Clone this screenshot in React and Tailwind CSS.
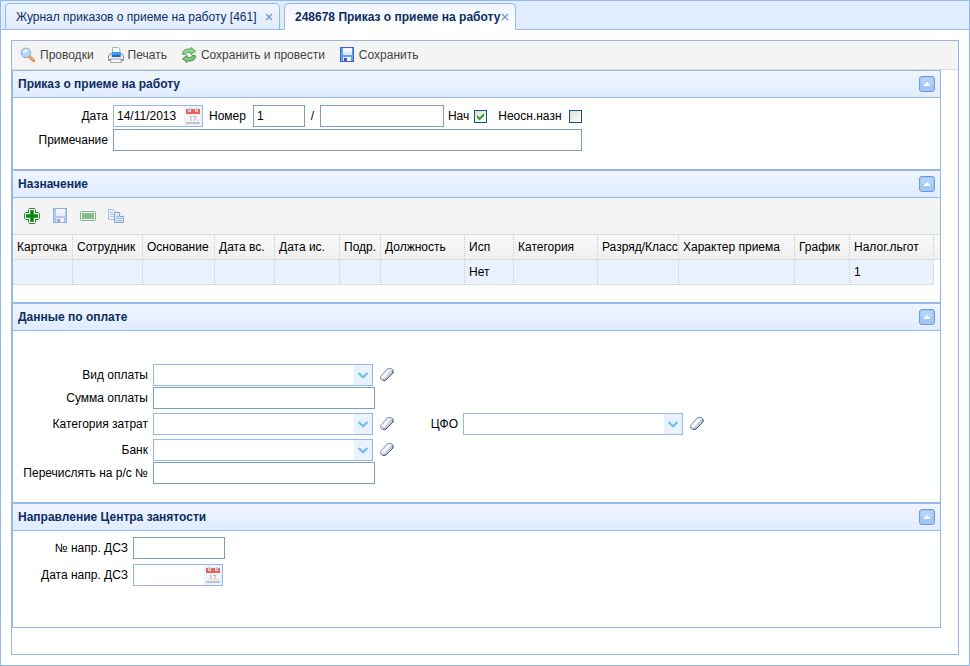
import { useState } from "react";

const COLUMNS = [
  { title: "Карточка", width: "w-[60px]" },
  { title: "Сотрудник", width: "w-[70px]" },
  { title: "Основание", width: "w-[72px]" },
  { title: "Дата вс.", width: "w-[60px]" },
  { title: "Дата ис.", width: "w-[65px]" },
  { title: "Подр.", width: "w-[41px]" },
  { title: "Должность", width: "w-[84px]" },
  { title: "Исп", width: "w-[49px]", value: "Нет" },
  { title: "Категория", width: "w-[84px]" },
  { title: "Разряд/Класс", width: "w-[81px]" },
  { title: "Характер приема", width: "w-[116px]" },
  { title: "График", width: "w-[55px]" },
  { title: "Налог.льгот", width: "w-[84px]", value: "1" }
];

function SearchIcon() {
  return (
    <svg viewBox="0 0 16 16" className="h-4 w-4 shrink-0" aria-hidden="true">
      <path d="M9.5 9.5l4 4" stroke="#b9793a" strokeWidth="3" strokeLinecap="round" />
      <path d="M10 9.600l3.400 3.400" stroke="#f8ae52" strokeWidth="1.800" strokeLinecap="round" />
      <circle cx="6" cy="5.800" r="4.700" fill="#b0dafa" stroke="#a3b4d0" strokeWidth="1.300" />
      <path d="M2.800 5.600a3.400 3.400 0 0 1 5.400-2.400C7 5.400 5 6 2.800 5.600z" fill="#e9f6ff" />
    </svg>
  );
}

function PrintIcon() {
  return (
    <svg viewBox="0 0 16 16" className="h-4 w-4 shrink-0" aria-hidden="true">
      <path d="M4.500.5h6l1.500 1.500V9H4.500z" fill="#f4f7fc" stroke="#a3b1c8" />
      <path d="M2 6.500h2V9h8.500V6.500H14l1.500 2.500v4.500H.5V9z" fill="#e2e5ec" stroke="#8d93a0" />
      <path d="M4 5h8.500v4H4z" fill="#3d9af5" />
      <path d="M4 8h8.500v2H4z" fill="#1766cb" />
      <path d="M1 10.500h14v1H1z" fill="#fafbfd" />
      <path d="M1 12h14v2H1z" fill="#8e949f" />
      <path d="M3 12h10l.5 3.500h-11z" fill="#f7f8fb" stroke="#8d93a0" strokeWidth=".8" />
    </svg>
  );
}

function RefreshIcon() {
  return (
    <svg viewBox="0 0 16 16" className="h-4 w-4 shrink-0" aria-hidden="true">
      <path
        d="M1.500 7.200C1.500 3.800 4 2 7 2h3V.6l4.500 3.600L10 7.600V5.600H7.500C5.500 5.600 5 6.300 4.800 7.500z"
        fill="#94d68f"
        stroke="#4a9550"
        strokeWidth=".9"
        strokeLinejoin="round"
      />
      <path
        d="M14.500 8.800C14.500 12.200 12 14 9 14H6v1.400L1.500 11.800 6 8.400v2h2.500c2 0 2.500-.7 2.700-1.900z"
        fill="#7cc878"
        stroke="#3d8544"
        strokeWidth=".9"
        strokeLinejoin="round"
      />
    </svg>
  );
}

function SaveIcon({ className = "" }) {
  return (
    <svg viewBox="0 0 16 16" className={`h-4 w-4 shrink-0 ${className}`} aria-hidden="true">
      <path d="M1 0h14v15H1z" fill="#3f63c4" />
      <path d="M2 1h12v13H2z" fill="#5fa0f5" />
      <path d="M4 1h9v7H4z" fill="#f2f8ff" />
      <path d="M4 5h9v3H4z" fill="#dbeafb" />
      <path d="M4 10h8v4H4z" fill="#e3e6f6" />
      <path d="M5 11h3v3H5z" fill="#5450b8" />
      <path d="M9 10h2v4H9z" fill="#fff" />
    </svg>
  );
}

function AddIcon() {
  return (
    <svg viewBox="0 0 16 16" className="h-4 w-4" aria-hidden="true">
      <path
        d="M5.500.5h5l1 1v3h3l1 1v5l-1 1h-3v3l-1 1h-5l-1-1v-3h-3l-1-1v-5l1-1h3v-3z"
        fill="#fff"
        stroke="#3b7a4b"
      />
      <path d="M6 2h4v4h4v4h-4v4H6v-4H2V6h4z" fill="#27a52b" />
      <path d="M7 3h2v4h4v2H9v4H7V9H3V7h4z" fill="#078a0b" />
    </svg>
  );
}

function RemoveIcon() {
  return (
    <svg viewBox="0 0 16 16" className="h-4 w-4 opacity-60" aria-hidden="true">
      <rect x=".5" y="3.500" width="15" height="9" rx="1" fill="#fff" stroke="#3b8a4b" />
      <path d="M2 5h12v6H2z" fill="#3fa04b" />
    </svg>
  );
}

function CopyIcon() {
  return (
    <svg viewBox="0 0 16 16" className="h-4 w-4 opacity-70" aria-hidden="true">
      <path d="M.5 1.500h5l3 3v7h-8z" fill="#eaf3ff" stroke="#8aa9d6" />
      <path d="M2 4.500h3M2 6.500h5M2 8.500h5" stroke="#8ab0e0" />
      <path d="M6.500 4.500h5l4 4v6h-9z" fill="#cfe3ff" stroke="#5b83bd" />
      <path d="M11.500 4.500v4h4" fill="#fff" stroke="#5b83bd" />
      <path d="M8 8.500h2.500M8 10.500h6M8 12.500h6" stroke="#7dabea" />
    </svg>
  );
}

function CalendarIcon() {
  return (
    <svg viewBox="0 0 16 16" className="h-4 w-4" aria-hidden="true">
      <path d="M1 6h14v9H1z" fill="#f4f4f4" />
      <path d="M1 14h14v2H1z" fill="#c4c4c4" />
      <path d="M1 1h14v5H1z" fill="#e8635e" />
      <path d="M3 0h3v4H3zM10 0h3v4h-3z" fill="#dcd3d3" />
      <path d="M4 1h1v2H4zM11 1h1v2h-1z" fill="#b9a5a5" />
      <path d="M5 8.500l1-.5v5M8 8.500h3L9.300 13" fill="none" stroke="#b9b9b9" />
      <path d="M11.500 12l2.500-.5-1 2.500z" fill="#d4d4d4" />
    </svg>
  );
}

function EraserIcon() {
  return (
    <svg viewBox="0 0 16 16" className="h-4 w-4" aria-hidden="true">
      <path
        d="M8.500 1.500h4l1.500 1.500v3L8 12l-2 1.500H3L1.500 12V9.500z"
        fill="#c3cbdc"
        stroke="#93a0ba"
        strokeLinejoin="round"
      />
      <path d="M9 2.500h3.500L7 9.500l-1.500 1.500H2.500V9.500z" fill="#f8f6fc" />
      <path d="M14 3.500V6L8 12l-2 1.500H4" fill="none" stroke="#4a5873" />
    </svg>
  );
}

function Tab({ title, active }) {
  return (
    <div
      className={`-mb-px flex h-[27px] items-center justify-between rounded-t-[5px] border border-[#95b8e7] bg-linear-to-b from-[#eff5ff] pr-1.5 pl-2.5 whitespace-nowrap text-[#0e2d5f] ${
        active ? "w-[232px] border-b-white to-white font-bold" : "w-[275px] to-[#e0ecff]"
      }`}
    >
      <button type="button" role="tab" aria-selected={active}>
        {title}
      </button>
      <button type="button" aria-label="Закрыть" className="flex h-3 w-2 items-center justify-center">
        <svg viewBox="0 0 8 8" className="h-2 w-2" aria-hidden="true">
          <path d="M1 1l6 6M7 1L1 7" stroke="#7397cf" strokeWidth="1.300" />
        </svg>
      </button>
    </div>
  );
}

function ToolButton({ icon, children }) {
  return (
    <button type="button" className="flex items-center gap-1 text-[#444]">
      {icon}
      {children}
    </button>
  );
}

function Section({ title, children }) {
  const [open, setOpen] = useState(true);

  return (
    <section className="border border-[#95b8e7] bg-white">
      <header className="flex h-[27px] items-center justify-between border-b border-[#95b8e7] bg-linear-to-b from-[#eff5ff] to-[#e0ecff] px-[5px]">
        <h2 className="font-bold text-[#0e2d5f]">{title}</h2>
        <button type="button" aria-label="Свернуть" aria-expanded={open} onClick={() => setOpen(!open)}>
          <svg viewBox="0 0 16 16" className="h-4 w-4" aria-hidden="true">
            <rect x=".5" y=".5" width="15" height="15" rx="2.500" fill="#a3c6f5" stroke="#6f9ad3" />
            <path d="M2 2h12v6H2z" fill="#b2d3fa" />
            <path d="M4 10l4-4 4 4z" fill="#fff" />
          </svg>
        </button>
      </header>
      {open && children}
    </section>
  );
}

function Label({ htmlFor, className = "", children }) {
  return (
    <label htmlFor={htmlFor} className={`shrink-0 text-right whitespace-nowrap ${className}`}>
      {children}
    </label>
  );
}

function TextInput({ id, className, ...props }) {
  return (
    <input
      id={id}
      type="text"
      className={`h-[22px] border border-[#7f9db9] bg-white px-[3px] outline-none ${className}`}
      {...props}
    />
  );
}

function DateInput({ id, defaultValue }) {
  return (
    <div className="flex h-[22px] w-[90px] border border-[#95b8e7] bg-white">
      <input id={id} type="text" defaultValue={defaultValue} className="min-w-0 flex-1 pl-[3px] outline-none" />
      <button type="button" aria-label="Выбрать дату" className="flex w-[18px] items-center justify-center bg-[#e9f2fe]">
        <CalendarIcon />
      </button>
    </div>
  );
}

function Combo({ id }) {
  return (
    <div className="flex items-center gap-1.5">
      <div className="relative h-[22px] w-[220px] border border-[#95b8e7]">
        <select id={id} className="h-full w-full appearance-none bg-white px-1 outline-none">
          <option value="" />
        </select>
        <span className="pointer-events-none absolute inset-y-0 right-0 flex w-[18px] items-center justify-center bg-[#e9f2fe]">
          <svg viewBox="0 0 10 7" className="h-[7px] w-2.5" aria-hidden="true">
            <path d="M.5 1l4.500 4.300L9.500 1" fill="none" stroke="#6fbcf2" strokeWidth="2.200" />
          </svg>
        </span>
      </div>
      <button type="button" aria-label="Очистить">
        <EraserIcon />
      </button>
    </div>
  );
}

function CheckBox({ id, defaultChecked }) {
  return (
    <span className="relative flex h-[13px] w-[13px]">
      <input
        id={id}
        type="checkbox"
        defaultChecked={defaultChecked}
        className="peer h-[13px] w-[13px] appearance-none border border-[#1c5180] bg-linear-to-br from-[#dcdcd7] to-white"
      />
      <svg
        viewBox="0 0 13 13"
        className="pointer-events-none absolute inset-0 hidden h-[13px] w-[13px] peer-checked:block"
        aria-hidden="true"
      >
        <path d="M3 5v3l2.500 2.300L10 6V3L5.500 7.400z" fill="#21a121" />
      </svg>
    </span>
  );
}

export default function App() {
  return (
    <div className="flex min-h-screen flex-col border border-[#95b8e7] bg-white font-['Liberation_Sans',Arial,sans-serif] text-xs text-black">
      <div role="tablist" className="flex h-[29px] items-end gap-1 border-b border-[#95b8e7] bg-[#e0ecff] pl-1">
        <Tab title="Журнал приказов о приеме на работу [461]" />
        <Tab title="248678 Приказ о приеме на работу" active />
      </div>

      <main className="m-2.5 flex-1 border border-[#95b8e7]">
        <div role="toolbar" className="flex h-[29px] items-center gap-3.5 border-b border-[#ddd] bg-[#f4f4f4] px-2">
          <ToolButton icon={<SearchIcon />}>Проводки</ToolButton>
          <ToolButton icon={<PrintIcon />}>Печать</ToolButton>
          <ToolButton icon={<RefreshIcon />}>Сохранить и провести</ToolButton>
          <ToolButton icon={<SaveIcon />}>Сохранить</ToolButton>
        </div>

        <div className="mr-[17px]">
          <Section title="Приказ о приеме на работу">
            <form className="flex flex-col gap-0.5 pt-[7px] pb-[18px]">
              <div className="flex items-center">
                <Label htmlFor="date" className="mr-[5px] w-[95px]">Дата</Label>
                <DateInput id="date" defaultValue="14/11/2013" />
                <Label htmlFor="number" className="mr-[7px] ml-1.5">Номер</Label>
                <TextInput id="number" defaultValue="1" className="w-[52px]" />
                <span className="w-[15px] text-center">/</span>
                <TextInput id="number-suffix" aria-label="Номер, часть 2" className="w-[124px]" />
                <Label htmlFor="accrual" className="mr-[5px] ml-1">Нач</Label>
                <CheckBox id="accrual" defaultChecked />
                <Label htmlFor="secondary" className="mr-[7px] ml-[11px]">Неосн.назн</Label>
                <CheckBox id="secondary" />
              </div>
              <div className="flex items-center gap-[5px]">
                <Label htmlFor="note" className="w-[95px]">Примечание</Label>
                <TextInput id="note" className="w-[469px]" />
              </div>
            </form>
          </Section>

          <Section title="Назначение">
            <div role="toolbar" className="flex h-[37px] items-center gap-3 border-b border-[#ddd] bg-[#f4f4f4] px-[11px]">
              <button type="button" aria-label="Добавить"><AddIcon /></button>
              <button type="button" aria-label="Сохранить"><SaveIcon className="opacity-50" /></button>
              <button type="button" aria-label="Удалить"><RemoveIcon /></button>
              <button type="button" aria-label="Копировать"><CopyIcon /></button>
            </div>
            <div className="pb-[17px]">
              <table className="w-full table-fixed border-separate border-spacing-0">
                <thead>
                  <tr className="h-[25px] bg-linear-to-b from-[#f9f9f9] to-[#efefef]">
                    {COLUMNS.map((column) => (
                      <th
                        key={column.title}
                        className={`overflow-hidden border-r border-b border-r-[#ccc] border-b-[#ddd] [border-right-style:dotted] p-0 pl-1 text-left font-normal whitespace-nowrap ${column.width}`}
                      >
                        {column.title}
                      </th>
                    ))}
                    <th className="border-b border-[#ddd] p-0" />
                  </tr>
                </thead>
                <tbody>
                  <tr className="h-[25px]">
                    {COLUMNS.map((column) => (
                      <td
                        key={column.title}
                        className="border-r border-b border-dotted border-[#ccc] bg-[#eaf2ff] p-0 pl-1"
                      >
                        {column.value}
                      </td>
                    ))}
                    <td className="p-0" />
                  </tr>
                </tbody>
              </table>
            </div>
          </Section>

          <Section title="Данные по оплате">
            <form className="flex flex-col gap-1 pt-[33px] pb-[18px]">
              <div className="flex flex-col gap-px">
                <div className="flex items-center gap-[5px]">
                  <Label htmlFor="pay-type" className="w-[135px]">Вид оплаты</Label>
                  <Combo id="pay-type" />
                </div>
                <div className="flex items-center gap-[5px]">
                  <Label htmlFor="pay-sum" className="w-[135px]">Сумма оплаты</Label>
                  <TextInput id="pay-sum" className="w-[222px]" />
                </div>
              </div>
              <div className="flex items-center gap-[5px]">
                <Label htmlFor="cost-category" className="w-[135px]">Категория затрат</Label>
                <Combo id="cost-category" />
                <Label htmlFor="cfo" className="w-[58px]">ЦФО</Label>
                <Combo id="cfo" />
              </div>
              <div className="flex flex-col gap-px">
                <div className="flex items-center gap-[5px]">
                  <Label htmlFor="bank" className="w-[135px]">Банк</Label>
                  <Combo id="bank" />
                </div>
                <div className="flex items-center gap-[5px]">
                  <Label htmlFor="account" className="w-[135px]">Перечислять на р/с №</Label>
                  <TextInput id="account" className="w-[222px]" />
                </div>
              </div>
            </form>
          </Section>

          <Section title="Направление Центра занятости">
            <form className="flex flex-col gap-[5px] pt-1.5 pb-[41px]">
              <div className="flex items-center gap-[5px]">
                <Label htmlFor="referral-number" className="w-[115px]">№ напр. ДСЗ</Label>
                <TextInput id="referral-number" className="w-[92px]" />
              </div>
              <div className="flex items-center gap-[5px]">
                <Label htmlFor="referral-date" className="w-[115px]">Дата напр. ДСЗ</Label>
                <DateInput id="referral-date" />
              </div>
            </form>
          </Section>
        </div>
      </main>
    </div>
  );
}
